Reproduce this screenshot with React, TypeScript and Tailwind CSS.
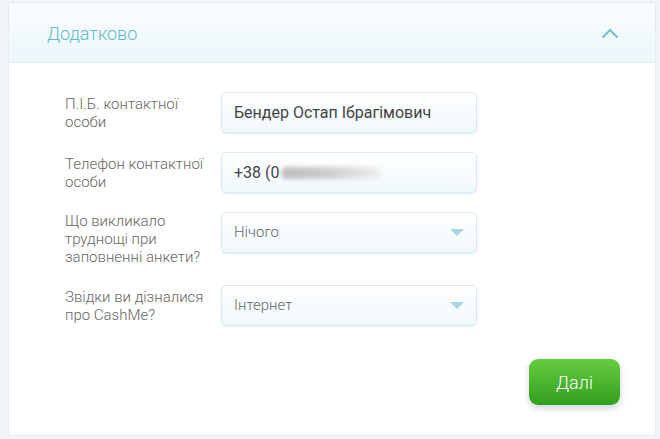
const fields = [
  { label: "П.І.Б. контактної особи", value: "Бендер Остап Ібрагімович", kind: "text" },
  { label: "Телефон контактної особи", value: "+38 (0", kind: "phone" },
  { label: "Що викликало труднощі при заповненні анкети?", value: "Нічого", kind: "select", top: true },
  { label: "Звідки ви дізналися про CashMe?", value: "Інтернет", kind: "select" },
];

const Caret = () => (
  <svg width="14" height="8" viewBox="0 0 14 8" className="shrink-0">
    <path d="M0 0 L14 0 L7 7 Z" fill="#a9d3e6" />
  </svg>
);

export default function App() {
  return (
    <div
      className="h-[439px] w-[660px] overflow-hidden bg-[#f3f6f9] pt-[2px] pl-[8px] text-[#555]"
      style={{ fontFamily: "Roboto, 'Noto Sans', sans-serif" }}
    >
      <div className="h-[434px] w-[648px] border border-[#e6edf1] bg-white">
        <div className="flex h-[60px] items-center justify-between border-b border-[#e3f0f5] bg-gradient-to-b from-[#fbfeff] to-[#ebf6fb] pl-[38px] pr-[36px]">
          <span className="pt-[2px] text-[18px] font-light text-[#63b9c7]">Додатково</span>
          <svg width="18" height="11" viewBox="0 0 18 11" className="mt-[2px]">
            <path d="M1.5 9.5 L9 2 L16.5 9.5" fill="none" stroke="#6bbcc8" strokeWidth="1.8" />
          </svg>
        </div>

        <div className="flex flex-col pt-[29px] pl-[56px]">
          {fields.map((f) => (
            <div
              key={f.label}
              className={"mb-[19px] flex " + (f.top ? "items-start" : "items-center")}
            >
              <div className="w-[156px] pr-2 text-[15px] font-light leading-[18px] text-[#666]">{f.label}</div>
              <div className="flex h-[41px] w-[256px] items-center justify-between rounded-[5px] border border-[#d9e9f0] bg-gradient-to-b from-white to-[#f0f8fc] px-[12px] shadow-[0_1px_2px_rgba(150,190,210,0.25)]">
                {f.kind === "phone" ? (
                  <div className="flex items-center">
                    <span className="text-[16px] text-[#444]">{f.value}</span>
                    <div className="ml-[1px] h-[12px] w-[100px] rounded-full bg-gradient-to-r from-[#bdbdbd] via-[#cfcfcf] to-[#f0f0f0] blur-[2px]" />
                  </div>
                ) : (
                  <span
                    className={
                      f.kind === "select"
                        ? "text-[15px] font-light text-[#666]"
                        : "text-[16px] text-[#444]"
                    }
                  >
                    {f.value}
                  </span>
                )}
                {f.kind === "select" && <Caret />}
              </div>
            </div>
          ))}
        </div>

        <div className="flex justify-end pr-[35px] pt-[14px]">
          <button
            type="button"
            className="h-[46px] w-[91px] rounded-[9px] bg-gradient-to-b from-[#66cc3f] to-[#2f9f1d] text-[18px] font-light text-white shadow-[0_3px_6px_rgba(60,80,120,0.25)]"
          >
            Далі
          </button>
        </div>
      </div>
    </div>
  );
}
